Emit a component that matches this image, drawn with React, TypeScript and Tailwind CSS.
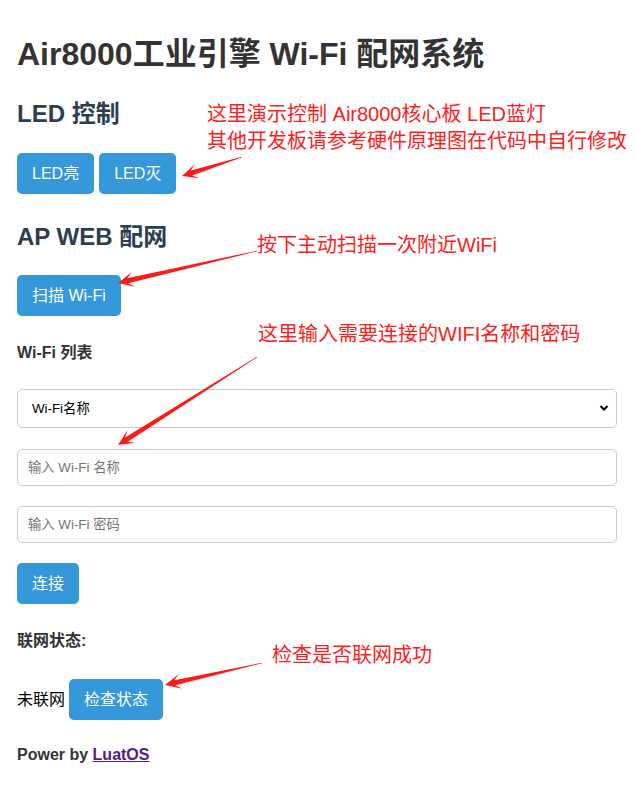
import React from 'react';

// red callout arrows: [tailX, tailY, tipX, tipY]
const arrows: [number, number, number, number][] = [
  [242, 157, 182, 176],
  [257, 251, 118, 283],
  [257, 357, 118, 445],
  [262, 663, 165, 685],
];

function arrowPoints(x1: number, y1: number, x2: number, y2: number) {
  const dx = x2 - x1;
  const dy = y2 - y1;
  const len = Math.hypot(dx, dy);
  const ux = dx / len;
  const uy = dy / len;
  const nx = -uy;
  const ny = ux;
  const p = (d: number, w: number) => `${(x2 - ux * d + nx * w).toFixed(1)},${(y2 - uy * d + ny * w).toFixed(1)}`;
  return [
    p(len, 0.3),
    p(10, 2.6),
    p(16, 7.5),
    p(0, 0),
    p(16, -7.5),
    p(10, -2.6),
    p(len, -0.3),
  ].join(' ');
}

const Btn = ({ children, className = '' }: { children: React.ReactNode; className?: string }) => (
  <button className={`bg-[#3498db] text-white text-[16px] leading-[21px] px-[15px] py-[10px] rounded-[5px] ${className}`}>
    {children}
  </button>
);

export default function App() {
  return (
    <div className="relative w-full min-h-[799px] bg-white text-[#333] font-['Liberation_Sans','Noto_Sans_CJK_SC',sans-serif]">
      <div className="flex flex-col items-start pl-[17px] pt-[36px]">
        <h1 className="text-[32px] leading-[37px] font-bold text-[#333]">Air8000工业引擎 Wi-Fi 配网系统</h1>

        <h2 className="mt-[27px] text-[24px] leading-[28px] font-bold text-[#2c3e50]">LED 控制</h2>
        <div className="mt-[25px] flex gap-[5px]">
          <Btn>LED亮</Btn>
          <Btn>LED灭</Btn>
        </div>

        <h2 className="mt-[29px] text-[24px] leading-[28px] font-bold text-[#2c3e50]">AP WEB 配网</h2>
        <Btn className="mt-[24px]">扫描 Wi-Fi</Btn>

        <label className="mt-[27px] text-[16px] leading-[20px] font-bold">Wi-Fi 列表</label>

        <div className="relative mt-[26px] w-[600px]">
          <select className="w-full h-[39px] appearance-none border border-[#ccc] rounded-[5px] pl-[14px] text-[13.33px] text-black bg-white">
            <option>Wi-Fi名称</option>
          </select>
          <svg className="absolute right-[8px] top-[15px] pointer-events-none" width="10" height="8" viewBox="0 0 10 8">
            <path d="M1.5 2 L5 5.5 L8.5 2" fill="none" stroke="#000" strokeWidth="2" />
          </svg>
        </div>

        <input
          className="mt-[21px] w-[600px] h-[37px] border border-[#ccc] rounded-[5px] px-[10px] text-[13.33px] placeholder:text-[#757575]"
          placeholder="输入 Wi-Fi 名称"
        />
        <input
          type="password"
          className="mt-[20px] w-[600px] h-[37px] border border-[#ccc] rounded-[5px] px-[10px] text-[13.33px] placeholder:text-[#757575]"
          placeholder="输入 Wi-Fi 密码"
        />

        <Btn className="mt-[20px]">连接</Btn>

        <p className="mt-[27px] text-[16px] leading-[20px] font-bold">联网状态:</p>
        <div className="mt-[28px] flex items-baseline gap-[4px] text-[16px]">
          <span className="text-black">未联网</span>
          <Btn>检查状态</Btn>
        </div>

        <p className="mt-[25px] text-[16px] leading-[20px] font-bold">
          Power by <a href="#" className="underline text-[#551a8b]">LuatOS</a>
        </p>
      </div>

      {/* annotations */}
      <div className="absolute left-[207px] top-[101px] text-[20px] leading-[27px] text-[#ff2020] pointer-events-none">
        <div>这里演示控制 Air8000核心板 LED蓝灯</div>
        <div>其他开发板请参考硬件原理图在代码中自行修改</div>
      </div>
      <div className="absolute left-[257px] top-[232px] text-[20px] leading-[27px] text-[#ff2020]">按下主动扫描一次附近WiFi</div>
      <div className="absolute left-[258px] top-[321px] text-[20px] leading-[27px] text-[#ff2020]">这里输入需要连接的WIFI名称和密码</div>
      <div className="absolute left-[272px] top-[642px] text-[20px] leading-[27px] text-[#ff2020]">检查是否联网成功</div>

      <svg className="absolute left-0 top-0 pointer-events-none" width="635" height="799" viewBox="0 0 635 799">
        {arrows.map(([a, b, c, d], i) => (
          <polygon key={i} points={arrowPoints(a, b, c, d)} fill="#ff1a1a" />
        ))}
      </svg>
    </div>
  );
}
